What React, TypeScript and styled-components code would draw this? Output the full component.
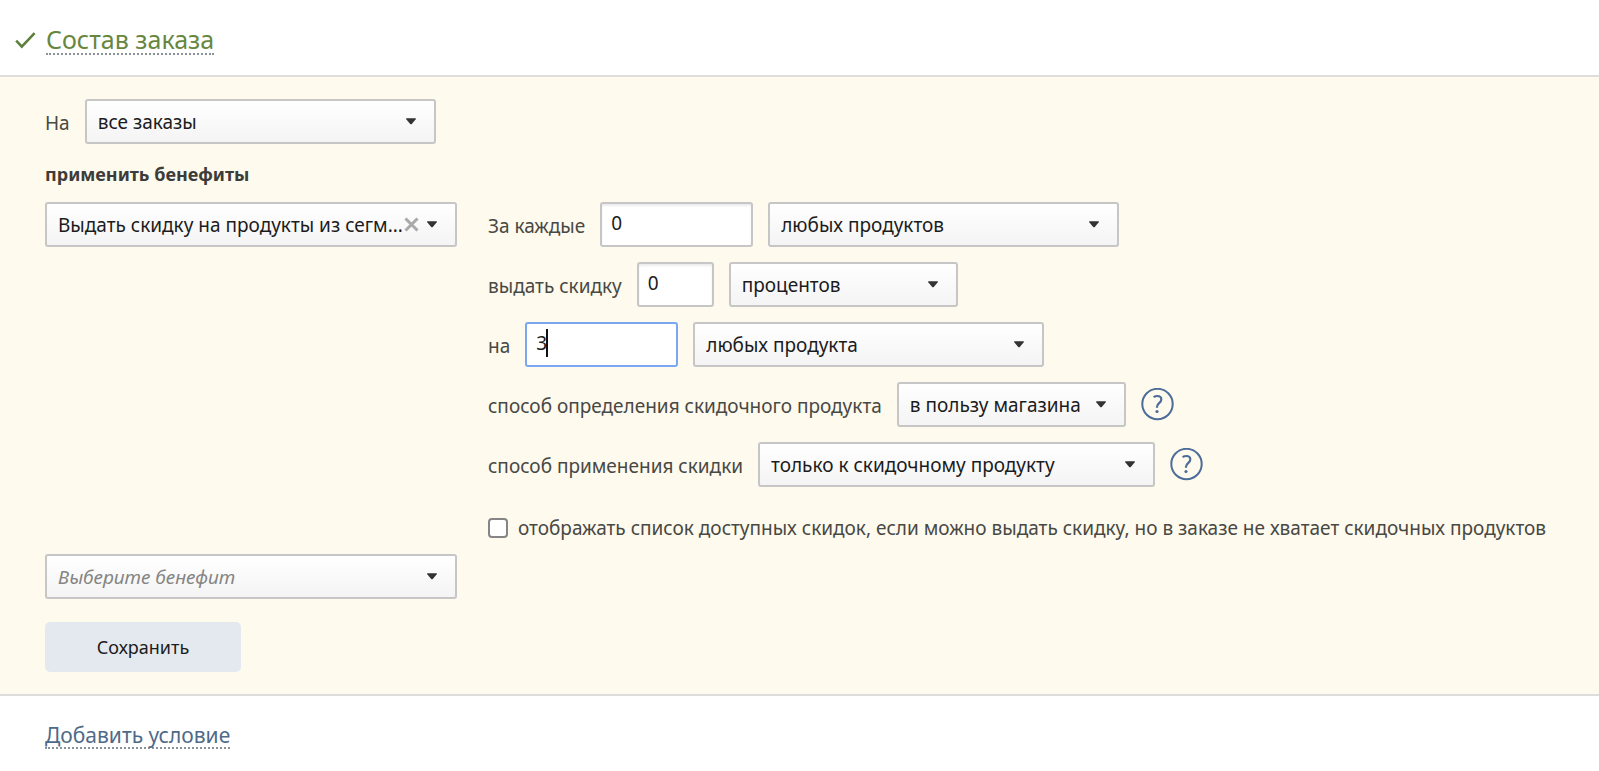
import React, { useState } from "react";
import styled, { createGlobalStyle } from "styled-components";

const GlobalStyle = createGlobalStyle`
  *, *::before, *::after { box-sizing: border-box; }
  body {
    margin: 0;
    background: #fff;
    color: #484844;
    font: 19px/24px "Noto Sans", "Open Sans", sans-serif;
  }
  button, input, select { font: inherit; margin: 0; }
`;

const Header = styled.header`
  display: flex;
  align-items: center;
  gap: 10px;
  padding: 25px 15px 20px;
`;

const Heading = styled.h1`
  margin: 0;
  font-size: 25px;
  line-height: 28px;
  font-weight: 400;
`;

const DashedLink = styled.a<{ $color: string }>`
  display: inline-block;
  color: ${(p) => p.$color};
  border-bottom: 2px dotted #8b9299;
  text-decoration: none;
`;

const Panel = styled.form`
  display: flex;
  flex-direction: column;
  padding: 22px 45px 22px;
  background: #fefaed;
  border: solid #dddddb;
  border-width: 2px 0;
`;

const Row = styled.div`
  display: flex;
  align-items: center;
  gap: 15px;
`;

const Subtitle = styled.h2`
  margin: 18px 0 16px;
  font-size: 18px;
  line-height: 24px;
  font-weight: 700;
  color: #3c3c3a;
`;

const Benefit = styled.div`
  display: grid;
  grid-template-columns: 412px minmax(0, 1fr);
  column-gap: 31px;
  align-items: start;
`;

const Fields = styled.div`
  display: flex;
  flex-direction: column;
  gap: 15px;
`;

const Label = styled.label`
  white-space: nowrap;
  padding-top: 2px;
`;

const SelectWrap = styled.div<{ $width: number }>`
  position: relative;
  flex: none;
  width: ${(p) => p.$width}px;
`;

const SelectBox = styled.select<{ $empty?: boolean }>`
  appearance: none;
  display: block;
  width: 100%;
  height: 45px;
  padding: 0 11px;
  border: 2px solid #c6c6c6;
  border-radius: 3px;
  background: linear-gradient(#ffffff, #f4f4f5);
  color: ${(p) => (p.$empty ? "#858583" : "#1c1c1c")};
  font-style: ${(p) => (p.$empty ? "italic" : "normal")};
  outline: none;
`;

const Caret = styled.svg`
  position: absolute;
  top: 19px;
  right: 20px;
  width: 10px;
  height: 7px;
  fill: #333;
  pointer-events: none;
`;

const Clear = styled.button`
  position: absolute;
  top: 15px;
  right: 38px;
  display: flex;
  padding: 0;
  border: 0;
  background: none;
`;

const NumberWrap = styled.div<{ $width: number; $active?: boolean }>`
  position: relative;
  flex: none;
  width: ${(p) => p.$width}px;
  &::after {
    content: "";
    display: ${(p) => (p.$active ? "block" : "none")};
    position: absolute;
    top: 7px;
    left: 21px;
    width: 2px;
    height: 28px;
    background: #111;
  }
`;

const NumberInput = styled.input<{ $active?: boolean }>`
  display: block;
  width: 100%;
  height: 45px;
  padding: 0 9px 3px;
  border: 2px solid ${(p) => (p.$active ? "#7ba7f0" : "#c6c6c6")};
  border-radius: 3px;
  background: #fff;
  box-shadow: ${(p) => (p.$active ? "none" : "inset 0 2px 2px #ececec")};
  color: #1c1c1c;
  outline: none;
`;

const Help = styled.button`
  display: flex;
  padding: 0;
  border: 0;
  background: none;
`;

const CheckRow = styled.label`
  display: flex;
  align-items: center;
  gap: 10px;
  margin: 14px 0;
  white-space: nowrap;
`;

const Checkbox = styled.input`
  appearance: none;
  flex: none;
  width: 20px;
  height: 20px;
  border: 2px solid #858585;
  border-radius: 4px;
  background: #fff;
  &:checked { background: #4c6c99; }
`;

const Save = styled.button`
  align-self: flex-start;
  width: 196px;
  height: 50px;
  margin-top: 23px;
  padding: 0;
  border: 0;
  border-radius: 5px;
  background: #e4e9ef;
  color: #1c1c1c;
  font-size: 18px;
`;

const Footer = styled.footer`
  padding: 27px 45px 20px;
  font-size: 21px;
`;

type SelectProps = { id: string; width: number; options: string[]; name?: string; empty?: boolean; clearable?: boolean };

function Select({ id, width, options, name, empty, clearable }: SelectProps) {
  return (
    <SelectWrap $width={width}>
      <SelectBox id={id} aria-label={name} $empty={empty}>
        {options.map((o) => <option key={o}>{o}</option>)}
      </SelectBox>
      {clearable && (
        <Clear type="button" aria-label="Очистить">
          <svg width="15" height="15" viewBox="0 0 15 15" stroke="#a9a9a9" strokeWidth="3">
            <path d="M1.5 1.5l12 12M13.5 1.5l-12 12" />
          </svg>
        </Clear>
      )}
      <Caret viewBox="0 0 11 7"><path d="M.5 0h10q.6.3.2.9L6.4 6.2q-.9.9-1.8 0L.3.9Q-.1.3.5 0z" /></Caret>
    </SelectWrap>
  );
}

type NumberProps = { id: string; width: number; initial: string; active?: boolean };

function NumberField({ id, width, initial, active }: NumberProps) {
  const [value, setValue] = useState(initial);
  return (
    <NumberWrap $width={width} $active={active}>
      <NumberInput id={id} $active={active} inputMode="numeric" value={value} onChange={(e) => setValue(e.target.value)} />
    </NumberWrap>
  );
}

function HelpButton() {
  return (
    <Help type="button" aria-label="Справка">
      <svg width="33" height="33" viewBox="0 0 33 33" fill="none" stroke="#4c6c99" strokeWidth="2">
        <circle cx="16.5" cy="16" r="15.2" />
        <path d="M12.6 9.1c1.2-.8 2.4-1.1 3.7-1.1 2.5 0 4 1.3 4 3.4 0 3.6-4.3 3.7-4.3 7.3v1" strokeWidth="2.2" />
        <circle cx="16" cy="23.5" r="1.6" fill="#4c6c99" stroke="none" />
      </svg>
    </Help>
  );
}

export default function App() {
  return (
    <>
      <GlobalStyle />
      <Header>
        <svg width="21" height="17" viewBox="0 0 21 17" fill="none" stroke="#5d7f3c" strokeWidth="2.6">
          <path d="M1.2 8.6l5.6 6L19.6 1.2" />
        </svg>
        <Heading><DashedLink href="#order" $color="#67873f">Состав заказа</DashedLink></Heading>
      </Header>
      <Panel>
        <Row>
          <Label htmlFor="orders">На</Label>
          <Select id="orders" width={351} options={["все заказы"]} />
        </Row>
        <Subtitle>применить бенефиты</Subtitle>
        <Benefit>
          <Select id="benefit" name="Бенефит" width={412} options={["Выдать скидку на продукты из сегм..."]} clearable />
          <Fields>
            <Row>
              <Label htmlFor="every">За каждые</Label>
              <NumberField id="every" width={153} initial="0" />
              <Select id="everyOf" name="Продукты" width={351} options={["любых продуктов"]} />
            </Row>
            <Row>
              <Label htmlFor="amount">выдать скидку</Label>
              <NumberField id="amount" width={77} initial="0" />
              <Select id="unit" name="Единица скидки" width={229} options={["процентов"]} />
            </Row>
            <Row>
              <Label htmlFor="count">на</Label>
              <NumberField id="count" width={153} initial="3" active />
              <Select id="countOf" name="Скидочные продукты" width={351} options={["любых продукта"]} />
            </Row>
            <Row>
              <Label htmlFor="choice">способ определения скидочного продукта</Label>
              <Select id="choice" width={229} options={["в пользу магазина"]} />
              <HelpButton />
            </Row>
            <Row>
              <Label htmlFor="method">способ применения скидки</Label>
              <Select id="method" width={397} options={["только к скидочному продукту"]} />
              <HelpButton />
            </Row>
            <CheckRow>
              <Checkbox type="checkbox" />
              отображать список доступных скидок, если можно выдать скидку, но в заказе не хватает скидочных продуктов
            </CheckRow>
          </Fields>
        </Benefit>
        <Select id="next" name="Следующий бенефит" width={412} options={["Выберите бенефит"]} empty />
        <Save type="button">Сохранить</Save>
      </Panel>
      <Footer><DashedLink href="#add" $color="#4f6a88">Добавить условие</DashedLink></Footer>
    </>
  );
}
